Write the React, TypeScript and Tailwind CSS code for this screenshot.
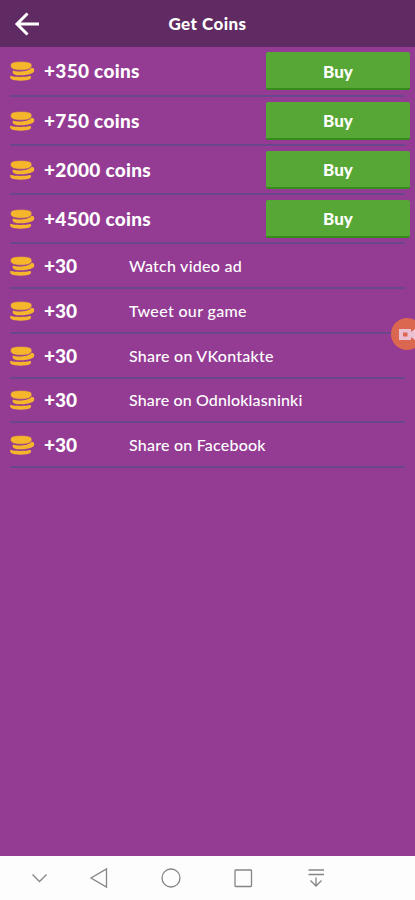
const packs = [
	{ amount: "+350 coins", height: "h-[50px]" },
	{ amount: "+750 coins", height: "h-[49px]" },
	{ amount: "+2000 coins", height: "h-[49px]" },
	{ amount: "+4500 coins", height: "h-[49px]" },
];

const tasks = [
	{ label: "Watch video ad", spacing: "tracking-[0.25px]", height: "h-[45px]" },
	{ label: "Tweet our game", spacing: "tracking-[0.35px]", height: "h-[45px]" },
	{ label: "Share on VKontakte", spacing: "tracking-[0.25px]", height: "h-[45px]" },
	{ label: "Share on Odnloklasninki", spacing: "tracking-[0.14px]", height: "h-[44px]" },
	{ label: "Share on Facebook", spacing: "tracking-[0.22px]", height: "h-[45px]" },
];

const Coins = () => (
	<svg className="w-[26px] h-5 shrink-0" viewBox="0 0 26 20" fill="#f6b62b">
		<path d="M.5 14.800c3 1.500 15 1.500 20 .3.800.8.8 2-.2 2.800-2.800 2.200-16 2.400-19.300 0C0 17.200-.1 15.700.5 14.800z" />
		<path d="M3 9.500c5 1.900 15 1.300 18.500-2.800 2.800-.2 3.500 2.800 2 4.600-3.200 3.200-15 4-19.500 1.900C2.500 12.400 2.200 10.500 3 9.500z" />
		<path d="M.5 4.700C.5 1.300 4 .6 11 .6s10.800.8 10.800 4.100S17.500 9.200 11 9.200.5 8 .5 4.700z" stroke="#943b94" strokeWidth="0.6" />
	</svg>
);

const Header = () => (
	<header className="h-[47px] shrink-0 bg-[#602a62] grid grid-cols-[52px_1fr_52px] items-center">
		<svg className="w-[26px] h-6 ml-[14px]" viewBox="0 0 26 24" fill="none" stroke="#fff" strokeWidth="3">
			<path d="M25 12H3M13.500 1.500 3 12l10.500 10.500" />
		</svg>
		<h1 className="text-center text-[17px] leading-5 font-black tracking-[0.45px]">Get Coins</h1>
	</header>
);

const BottomNav = () => (
	<nav className="h-[44px] shrink-0 bg-[#fdfdfd]">
		<svg className="w-full h-full" viewBox="0 0 415 44" fill="none" stroke="#858585" strokeWidth="1.3">
			<path d="m32.500 18.500 7 7 7-7" />
			<path d="M106.500 13v18L91 22z" />
			<circle cx="171" cy="22" r="9" />
			<rect x="235" y="14" width="16.500" height="16.500" rx="0.800" />
			<path d="M308.500 14h15.500M308.500 18.500h15.500M316 21.500v8.500M310.500 24.500l5.500 5.500 5.500-5.500" />
		</svg>
	</nav>
);

const App = () => {
	return (
		<div className="relative w-full h-screen overflow-hidden flex flex-col bg-[#943b94] text-white font-[Lato,sans-serif]">
			<Header />
			<main className="flex-1">
				{packs.map((pack) => (
					<div key={pack.amount} className={`pl-[10px] pr-[5px] flex flex-col ${pack.height}`}>
						<div className="flex-1 flex items-center">
							<Coins />
							<span className="ml-2 text-[19px] leading-6 font-black tracking-[0.3px]">{pack.amount}</span>
							<button className="ml-auto w-[144px] h-[38px] pt-[3px] rounded-[2px] bg-[#57a737] border-b-2 border-[#368c1b] text-[17px] font-black">
								Buy
							</button>
						</div>
						<div className="h-0.5 mr-[5px] bg-[#69468e]" />
					</div>
				))}
				{tasks.map((task) => (
					<div key={task.label} className={`px-[10px] flex flex-col ${task.height}`}>
						<div className="flex-1 flex items-center">
							<Coins />
							<span className="ml-2 w-[85px] text-[19px] leading-6 font-black">+30</span>
							<span className={`text-[16px] leading-6 font-medium ${task.spacing}`}>{task.label}</span>
						</div>
						<div className="h-0.5 bg-[#69468e]" />
					</div>
				))}
			</main>
			<BottomNav />
			<div className="absolute top-[318px] left-[391px] w-8 h-8 rounded-full bg-[#dc6750]">
				<svg className="w-8 h-8" viewBox="0 0 32 32" fill="#eac0d2">
					<path fillRule="evenodd" d="M8 11h12v3l4-3v11l-4-3v3H8zM12 14.500v4h4.500v-4z" />
				</svg>
			</div>
		</div>
	);
};

export default App;
